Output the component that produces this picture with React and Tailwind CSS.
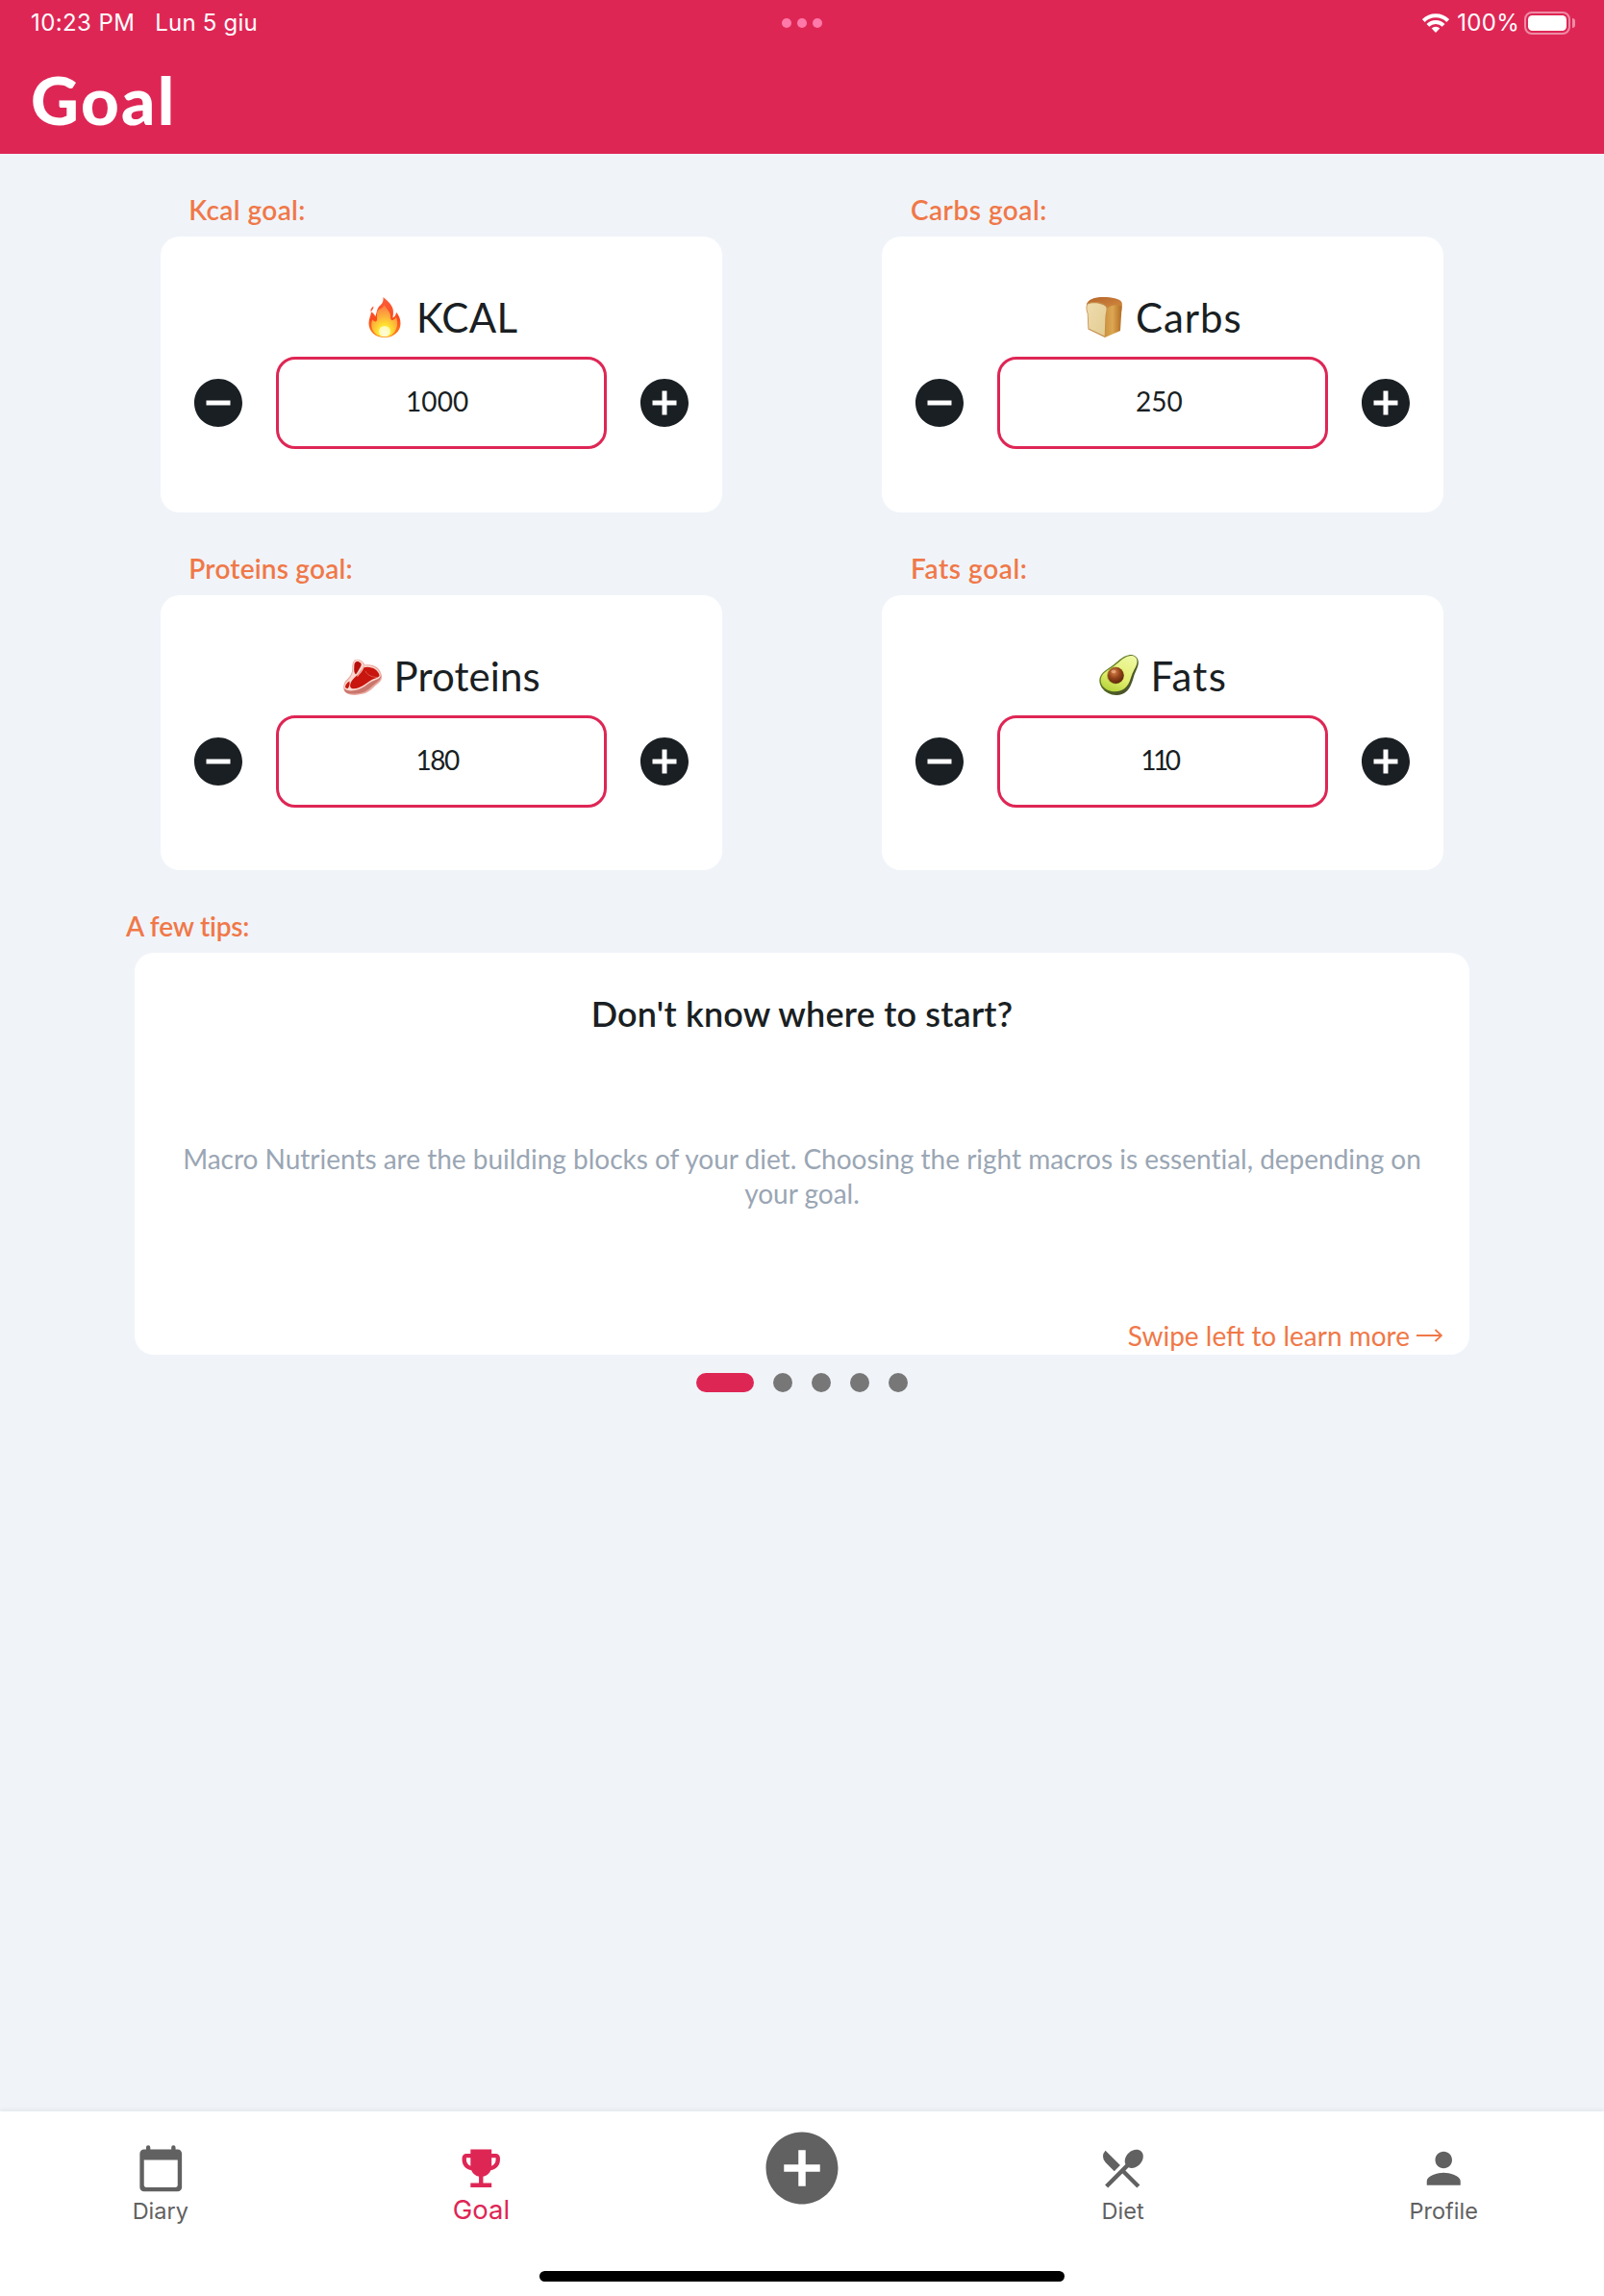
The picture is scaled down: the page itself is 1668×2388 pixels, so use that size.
import React from "react";
import { MdAddCircle, MdRemoveCircle, MdEmojiEvents, MdRestaurantMenu, MdPerson } from "react-icons/md";

function Fire() {
  return (
    <svg className="h-[42px] w-[34px]" viewBox="0 0 34 42">
      <defs>
        <linearGradient id="fireOuter" x1="0" y1="0" x2="0" y2="1">
          <stop offset="0" stopColor="#fb5f3c" />
          <stop offset="0.55" stopColor="#fb4a1c" />
          <stop offset="1" stopColor="#fd8a1c" />
        </linearGradient>
        <radialGradient id="fireInner" cx="0.5" cy="0.88" r="0.85">
          <stop offset="0" stopColor="#fffbd2" />
          <stop offset="0.25" stopColor="#ffe92f" />
          <stop offset="0.6" stopColor="#fdb33b" />
          <stop offset="1" stopColor="#fd7f44" />
        </radialGradient>
      </defs>
      <path fill="url(#fireOuter)" d="M15.500 0C19 3 24 7 25.500 12c.9 3.500.3 7-.1 9.500 2-.8 3.300-2.500 3.600-5.700 2.600 2.700 4.500 6.700 4.500 11.500C33.500 36 26.500 42 17 42S.5 36 .5 27.500C.5 22.500 2.500 20 3 15.500c2.300 1 3.600 2.500 4.300 4.700C9.300 15 9 11 12.500 8.500 15.200 6.500 15.800 3.500 15.500 0Z" />
      <path fill="url(#fireInner)" d="M16.500 8c2.300 4 6.500 7 6.600 12.500.1 3 .9 4 2.700 3.300 1.500-.6 2.500-1.700 3.200-3 1.300 3.700 1.700 7.500.4 11.200C27.500 38 23 41.300 17 41.300S6 38.500 4 33c-1.200-3.500-.8-7 .3-9.500 1.400 1.500 3 2.800 4.200 1.500 1.500-2-.3-6 1-10 1.200-3 6-3 7-7Z" />
      <ellipse cx="17" cy="35.500" rx="6" ry="5.500" fill="#fffde0" opacity="0.75" />
      <path fill="#fb5a3c" d="M5.300 9.500c.5 2.300-1 4-2.700 6C2 13 3 11 5.300 9.500Z" />
    </svg>
  );
}

function Bread() {
  return (
    <svg className="h-[42px] w-[38px]" viewBox="0 0 38 42">
      <defs>
        <linearGradient id="breadSide" x1="0" y1="0" x2="1" y2="0">
          <stop offset="0" stopColor="#c98d3c" />
          <stop offset="0.5" stopColor="#dca752" />
          <stop offset="1" stopColor="#b06a22" />
        </linearGradient>
        <linearGradient id="breadTop" x1="0" y1="0" x2="1" y2="1">
          <stop offset="0" stopColor="#b5642a" />
          <stop offset="1" stopColor="#d28a40" />
        </linearGradient>
        <linearGradient id="breadFace" x1="0" y1="0" x2="1" y2="1">
          <stop offset="0" stopColor="#efdcae" />
          <stop offset="1" stopColor="#e2cc92" />
        </linearGradient>
      </defs>
      <path fill="url(#breadSide)" d="M18 6C24 4 33 3 37 6c1.300 3 .8 6.500.2 9.500L36 35 20 42Z" />
      <path fill="url(#breadTop)" d="M.8 8C2 2.500 9 0 18 0c9.500 0 17 1.500 19.300 5 .7 1.500.7 3 .3 4.500C34 7.500 27 8 22.500 11.500 19 7 6 5.500.8 8Z" />
      <path fill="#c48a48" d="M1.500 6.500C8 3.500 20 5.500 22 10c1 2.700-.7 7-.9 11L20 42 2.500 33.500 1.700 17C.3 14 0 9.500 1.500 6.500Z" />
      <path fill="url(#breadFace)" d="M2 7.500C8 4.800 18.500 6.500 21.300 10.500c1 2.700-.7 6.500-.9 10.500L19.700 40.600 3.300 32.800 2.400 16.700C1 14 .9 10 2 7.500Z" />
    </svg>
  );
}

function Steak() {
  return (
    <svg className="h-[42px] w-[40px]" viewBox="0 -4 40 42">
      <path fill="#e9aaa0" d="M10.500 3C11.500.5 15 0 17.500 1.500c2.500 1.200 4 3 5 5 4.500-1 9 .2 12.500 2.500 3 2.500 5 6.500 5 10.500-.3 4.500-3.500 6-7 9-4 3.800-7 7-13 8.300-4.500 1-9 1.500-12.500.7C2.500 36.500.3 34 .2 30.500c0-4 1-7 4.300-9.500C7.500 18.500 9.500 14 9.300 10 9.200 7 9.500 5 10.500 3Z" />
      <path fill="#b34b44" d="M1 31.500c3 2.200 9 1.300 13.500-.3 6-2 9-6 13.500-9 4-2.700 8-3.200 11.500-4.700-.2 3-2 5.500-5.500 8-4.500 3-7.500 7.500-13.500 9.500-4.500 1.500-11 2-14.500 1.300C3.300 35.500 1.200 34.500 1 31.500Z" opacity="0.55" />
      <path fill="#fbd9d0" d="M11 3.500C12 1 15 .8 17.300 2.300c2.200 1.200 3.500 3 4.500 5.200 4.500-1 9 .2 12.200 2.500 2.700 2.200 4.500 5 4.700 8.300-1 3-4.500 3.400-8 5C25.500 25.500 22 30 16 32 11 33.500 4 34.500 1.500 31c-1-3 .7-6.500 3.800-9 3.200-3 5-7.500 4.800-12C10 7.500 10.200 5.500 11 3.500Z" />
      <path fill="#b90f0c" d="M12 4.500c1.300-2.500 4.200-1.800 6 0 1.700 1.700 0 4-1.500 6.500-1.200 2-2.200 4-3.500 5.500-1.800-2-2-4.500-1.700-7.500.1-1.700 0-3.300.7-4.500Z" />
      <path fill="#c8150d" d="M12.500 19c3.500-2.500 5.500-7 8.500-9.800 4.500-1.200 9-.2 12 1.800 2.500 1.800 4.500 4.500 4.600 7-1.600 2-5 2.500-8 4-4.100 2.300-8.100 6.500-13.600 8.300-3.500 1.200-7.500 1.700-8.700-.8C6.500 26 9 22 12.500 19Z" />
      <path fill="#c8150d" d="M2 29.500c.2-2.500 1.800-4.500 4.300-6 .7 2.300.2 5-1.300 7.200-1.500.5-2.700 0-3-1.200Z" />
      <path fill="none" stroke="#f3b5a8" strokeWidth="1.200" d="M21.500 7.500c-1 4.500-4 7-7 11" />
      <path fill="none" stroke="#e0685c" strokeWidth="0.800" d="M23 13c1.500 3.500 5.500 6 12 6.500" />
    </svg>
  );
}

function Avocado() {
  return (
    <svg className="h-[42px] w-[41px]" viewBox="0 0 41 42">
      <defs>
        <linearGradient id="avoSkin" x1="0" y1="0" x2="1" y2="1">
          <stop offset="0" stopColor="#7ea52c" />
          <stop offset="0.6" stopColor="#4d5f24" />
          <stop offset="1" stopColor="#4b4535" />
        </linearGradient>
        <linearGradient id="avoFlesh" x1="0.7" y1="0" x2="0.3" y2="1">
          <stop offset="0" stopColor="#eef8a0" />
          <stop offset="0.6" stopColor="#e3ee70" />
          <stop offset="1" stopColor="#b7d53c" />
        </linearGradient>
        <radialGradient id="avoPit" cx="0.4" cy="0.3" r="0.75">
          <stop offset="0" stopColor="#d9834d" />
          <stop offset="0.5" stopColor="#93431a" />
          <stop offset="1" stopColor="#55220b" />
        </radialGradient>
      </defs>
      <path fill="url(#avoSkin)" d="M31 .2c5-.6 9.500 2 9.800 7.300.3 5-3.300 10-5 16C33.500 31 32 35 28 38.500c-5 4.500-13 4.300-18.500 1.500C3.500 37 .2 31.500.3 26.500.5 20 6 16.500 12 12.500 19 8 23.500 1.200 31 .2Z" />
      <path fill="url(#avoFlesh)" d="M31.500 1.200C36 .7 39.500 2.500 39.500 7c0 4.500-3.500 8.500-5.500 14-2 5.500-3 10.500-7.500 14-5 4-12 4-17 2-5-2.300-8-6-7.800-11C2 20 7.500 17 13 13.500 20 9 25 2 31.500 1.200Z" />
      <ellipse cx="17" cy="21.500" rx="9" ry="9" fill="#a5a832" />
      <ellipse cx="17.300" cy="21.500" rx="8.300" ry="8.500" fill="url(#avoPit)" />
      <ellipse cx="15" cy="17.500" rx="2.500" ry="1.800" fill="#f5c09a" opacity="0.6" />
    </svg>
  );
}

function CalendarIcon() {
  return (
    <svg className="size-[52.5px]" viewBox="0 0 24 24" fill="currentColor">
      <path d="M20 3h-1V2a1 1 0 0 0-2 0v1H7V2a1 1 0 0 0-2 0v1H4c-1.100 0-2 .9-2 2v16c0 1.100.9 2 2 2h16c1.100 0 2-.9 2-2V5c0-1.100-.9-2-2-2zm-1 18H5c-.55 0-1-.45-1-1V8h16v12c0 .55-.45 1-1 1z" />
    </svg>
  );
}

function StatusBar() {
  return (
    <div className="grid h-12 grid-cols-3 items-start pt-3 font-['Inter',sans-serif] text-2xl leading-6 font-normal text-white">
      <div className="flex gap-[21px] pl-8">
        <span className="tracking-[0.4px]">10:23 PM</span>
        <span className="tracking-[0.200px]">Lun 5 giu</span>
      </div>
      <div className="flex justify-center gap-1.5 pt-[7px]">
        <span className="size-2.5 rounded-full bg-[#ff7aa9]" />
        <span className="size-2.5 rounded-full bg-[#ff7aa9]" />
        <span className="size-2.5 rounded-full bg-[#ff7aa9]" />
      </div>
      <div className="flex justify-end pr-[30px]">
        <svg className="mt-0.5 mr-2 h-5 w-7" viewBox="0 0 28 20" fill="none" stroke="white" strokeWidth="4">
          <path d="M1.300 7.500A18 18 0 0 1 26.700 7.500" />
          <path d="M5.900 12.400A11.500 11.500 0 0 1 22.100 12.400" />
          <path d="M14 20 9.700 15.600A6.200 6.200 0 0 1 18.300 15.600Z" fill="white" stroke="none" />
        </svg>
        <span className="mr-[5px] tracking-[0.300px]">100%</span>
        <span className="h-6 w-12 rounded-[8px] border-2 border-[#ee8ba5] p-0.5">
          <span className="block h-full w-full rounded-[4.500px] bg-white" />
        </span>
        <span className="mt-[7px] ml-0.5 h-2.5 w-[3px] rounded-r-full bg-[#ee8ba5]" />
      </div>
    </div>
  );
}

const goals = [
  { label: "Kcal goal:", lt: "tracking-[0.4px]", Icon: Fire, title: "KCAL", tt: "tracking-[0.3px]", value: "1000", vt: "tracking-[0.1px]" },
  { label: "Carbs goal:", lt: "tracking-[0.5px]", Icon: Bread, title: "Carbs", tt: "tracking-[0.9px]", value: "250", vt: "tracking-[0px]" },
  { label: "Proteins goal:", lt: "tracking-[0.200px]", Icon: Steak, title: "Proteins", tt: "tracking-[0.1px]", value: "180", vt: "tracking-[-1.500px]" },
  { label: "Fats goal:", lt: "tracking-[0.6px]", Icon: Avocado, title: "Fats", tt: "tracking-[1.300px]", value: "110", vt: "tracking-[-3.500px]" },
];

function GoalCard({ label, lt, Icon, title, tt, value, vt }) {
  return (
    <section className="w-[583.8px] pt-10">
      <h2 className={`mb-2.5 pl-[29.500px] text-[28px] leading-9 font-semibold text-[#f07848] ${lt}`}>{label}</h2>
      <div className="h-[286.600px] rounded-[20px] bg-white px-[30px] pt-[59px] text-[#1a1f23]">
        <div className="flex h-[50px] items-center justify-center gap-3">
          <span className="flex w-[42px] justify-center pb-px">
            <Icon />
          </span>
          <span className={`text-[42px] leading-[50px] font-normal ${tt}`}>{title}</span>
        </div>
        <div className="mt-4 flex items-center justify-between">
          <MdRemoveCircle className="size-[60px]" />
          <div className="flex h-24 w-[344px] items-center justify-center rounded-[20px] border-3 border-[#de2655] pr-2 pb-1">
            <span className={`text-[28px] leading-9 font-normal ${vt}`}>{value}</span>
          </div>
          <MdAddCircle className="size-[60px]" />
        </div>
      </div>
    </section>
  );
}

function Tips() {
  return (
    <section className="pt-10">
      <h2 className="mb-2.5 pl-[131px] text-[28px] leading-9 font-semibold tracking-[-0.200px] text-[#f07848]">A few tips:</h2>
      <div className="mx-auto h-[418px] w-[1388px] rounded-[20px] bg-white pt-[41px] text-center">
        <h3 className="text-[36px] leading-[44px] font-semibold tracking-[0.200px] text-[#1a1f23]">Don't know where to start?</h3>
        <p className="mt-[111px] px-[45px] text-[28px] leading-9 font-normal tracking-[-0.010px] text-[#9aa6b4]">
          Macro Nutrients are the building blocks of your diet. Choosing the right macros is essential, depending on your goal.
        </p>
        <div className="mt-28 flex items-center justify-end gap-[7px] pr-7 text-[#f07848]">
          <span className="text-[28px] leading-9 font-normal">Swipe left to learn more</span>
          <svg className="h-3.5 w-[27px]" viewBox="0 0 27 14" fill="none" stroke="currentColor" strokeWidth="1.800">
            <path d="M0 7H26M19.500 1 26 7 19.500 13" />
          </svg>
        </div>
      </div>
      <div className="mt-[19px] flex justify-center gap-5">
        <span className="h-5 w-[60px] rounded-full bg-[#de2655]" />
        <span className="size-5 rounded-full bg-[#777777]" />
        <span className="size-5 rounded-full bg-[#777777]" />
        <span className="size-5 rounded-full bg-[#777777]" />
        <span className="size-5 rounded-full bg-[#777777]" />
      </div>
    </section>
  );
}

function Tab({ icon, label, active }) {
  return (
    <div className={`flex flex-col items-center pt-[32.500px] ${active ? "text-[#de2655]" : "text-[#616161]"}`}>
      {icon}
      <span className={active ? "mt-px text-[27.500px] leading-8" : "mt-[5px] text-[23.500px] leading-7"}>{label}</span>
    </div>
  );
}

function TabBar() {
  return (
    <nav className="h-48 bg-white font-['Inter',sans-serif] font-normal shadow-[0_-1px_5px_rgba(0,0,0,0.07)]">
      <div className="grid h-[166px] grid-cols-5">
        <Tab icon={<CalendarIcon />} label="Diary" />
        <Tab icon={<MdEmojiEvents className="size-[52.5px]" />} label="Goal" active />
        <div className="flex justify-center pt-3.5">
          <MdAddCircle className="size-[90px] text-[#616161]" />
        </div>
        <Tab icon={<MdRestaurantMenu className="size-[52.5px]" />} label="Diet" />
        <Tab icon={<MdPerson className="size-[52.5px]" />} label="Profile" />
      </div>
      <div className="mx-auto h-[11px] w-[546px] rounded-full bg-black" />
    </nav>
  );
}

export default function App() {
  return (
    <div className="flex h-[2388px] w-[1668px] flex-col overflow-hidden bg-[#f0f4f9] font-['Lato',sans-serif]">
      <header className="h-40 bg-[#de2655]">
        <StatusBar />
        <h1 className="mt-4 pl-8 text-[69px] leading-[80px] font-black tracking-[2.300px] text-white">Goal</h1>
      </header>
      <main className="flex-1">
        <div className="flex flex-wrap justify-between px-[166.800px]">
          {goals.map((g) => (
            <GoalCard key={g.label} {...g} />
          ))}
        </div>
        <Tips />
      </main>
      <TabBar />
    </div>
  );
}
